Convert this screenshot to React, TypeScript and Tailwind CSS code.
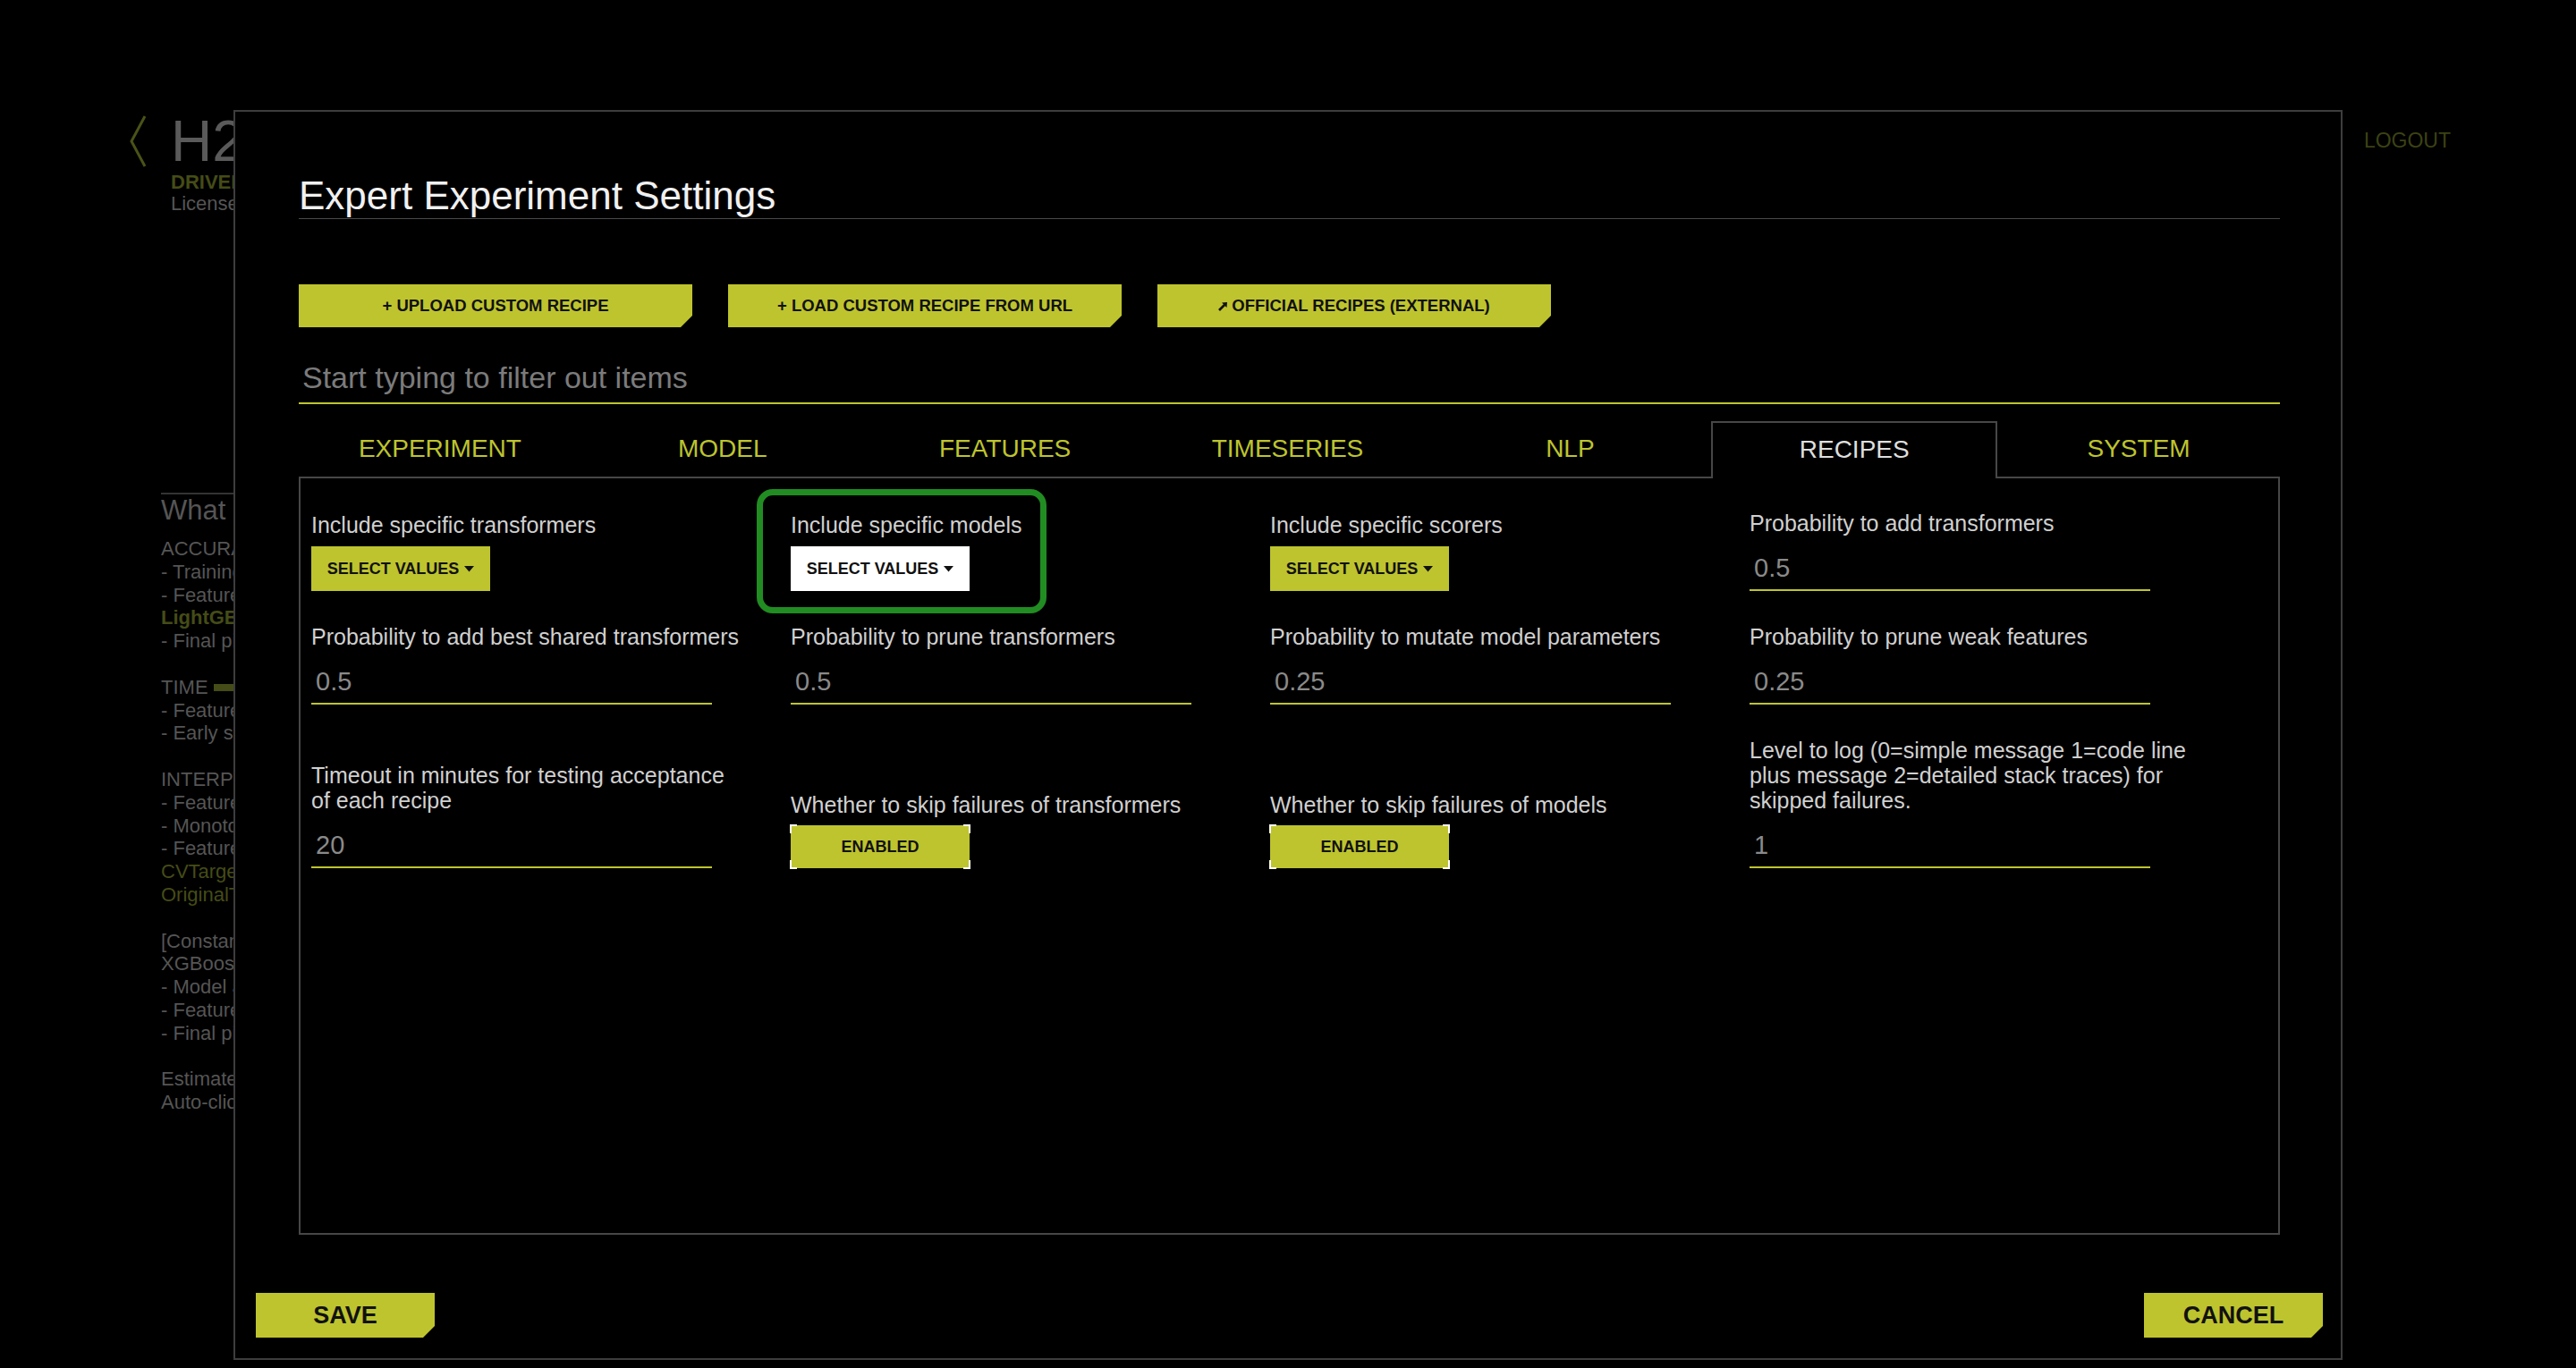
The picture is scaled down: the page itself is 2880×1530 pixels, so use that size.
import React from "react";

type Line = { t: string; olive?: boolean; bold?: boolean; bar?: boolean };

const bgLines: Line[] = [
  { t: "ACCURACY [7/10]:" },
  { t: "- Training data size: 10,000 rows, 20 cols" },
  { t: "- Feature evolution: [LightGBM, XGBoostGBM]" },
  { t: "LightGBM, XGBoostGBM, GLM", olive: true, bold: true },
  { t: "- Final pipeline: Ensemble (4 models)" },
  { t: "" },
  { t: "TIME", bar: true },
  { t: "- Feature evolution: 4 individuals, up to 66 iterations" },
  { t: "- Early stopping: After 10 iterations of no improvement" },
  { t: "" },
  { t: "INTERPRETABILITY [6/10]:" },
  { t: "- Feature pre-pruning strategy: Permutation Importance" },
  { t: "- Monotonicity constraints: disabled" },
  { t: "- Feature engineering search space:" },
  { t: "CVTargetEncode, ClusterTE, Frequent, Interactions", olive: true },
  { t: "OriginalTransformer, NumToCatTE, WeightOfEvidence", olive: true },
  { t: "" },
  { t: "[Constant, DecisionTree, GLM, LightGBM, RuleFit, TensorFlow," },
  { t: "XGBoostGBM] models to train:" },
  { t: "- Model and feature tuning: 8" },
  { t: "- Feature evolution: 264" },
  { t: "- Final pipeline: 4" },
  { t: "" },
  { t: "Estimated runtime: minutes" },
  { t: "Auto-click Finish/Abort if not done in: 1 day/7 days" },
];

const cut =
  "[clip-path:polygon(0_0,100%_0,100%_calc(100%_-_13px),calc(100%_-_13px)_100%,0_100%)]";

function Label({ children }: { children: React.ReactNode }) {
  return (
    <div className="text-[25px] leading-[28px] text-[#d0d0d0] whitespace-nowrap">
      {children}
    </div>
  );
}

function InputField({ label, value }: { label: React.ReactNode; value: string }) {
  return (
    <div className="flex flex-col">
      <Label>{label}</Label>
      <div className="mt-[14px] h-[48px] w-[448px] border-b-2 border-[#bec42e] flex items-center pl-[5px] text-[29px] text-[#8a8a8a]">
        {value}
      </div>
    </div>
  );
}

function Caret() {
  return (
    <svg width="11" height="7" viewBox="0 0 11 7" className="ml-[6px]">
      <path d="M0 0 L11 0 L5.5 6.5 Z" fill="#111" />
    </svg>
  );
}

function SelectField({ label, active }: { label: string; active?: boolean }) {
  return (
    <div className="flex flex-col relative">
      {active && (
        <div className="absolute left-[-38px] top-[-26px] w-[324px] h-[139px] rounded-[18px] border-[7px] border-[#218c22]" />
      )}
      <Label>{label}</Label>
      <div
        className={
          "mt-[10px] h-[50px] w-[200px] flex items-center justify-center text-[18px] font-bold text-[#111] " +
          (active ? "bg-white" : "bg-[#bec42e]")
        }
      >
        SELECT VALUES
        <Caret />
      </div>
    </div>
  );
}

function ToggleField({ label }: { label: string }) {
  return (
    <div className="flex flex-col">
      <Label>{label}</Label>
      <div className="mt-[9px] h-[48px] w-[200px] relative bg-[#bec42e] flex items-center justify-center text-[18px] font-bold text-[#111]">
        ENABLED
        <span className="absolute left-[-1px] top-[-1px] w-[8px] h-[10px] border-l-2 border-t-2 border-white" />
        <span className="absolute right-[-1px] top-[-1px] w-[8px] h-[10px] border-r-2 border-t-2 border-white" />
        <span className="absolute left-[-1px] bottom-[-1px] w-[8px] h-[10px] border-l-2 border-b-2 border-white" />
        <span className="absolute right-[-1px] bottom-[-1px] w-[8px] h-[10px] border-r-2 border-b-2 border-white" />
      </div>
    </div>
  );
}

function ExtIcon() {
  return (
    <svg width="11" height="11" viewBox="0 0 11 11" className="mr-[4px]">
      <path d="M1 10 L7 4" stroke="#111" strokeWidth="2.6" />
      <path d="M4 1.5 L10 1 L9.5 7 Z" fill="#111" />
    </svg>
  );
}

const tabs = ["EXPERIMENT", "MODEL", "FEATURES", "TIMESERIES", "NLP", "RECIPES", "SYSTEM"];

export default function App() {
  return (
    <div
      className="relative w-[2880px] h-[1530px] bg-black overflow-hidden"
      style={{ fontFamily: '"Liberation Sans", Arial, sans-serif' }}
    >
      {/* Background page */}
      <div className="flex items-start pt-[128px] pl-[144px] pr-[140px]">
        <svg width="20" height="58" viewBox="0 0 20 58" className="mt-[1px]">
          <path d="M18 1 L3 29 L18 57" stroke="#4a5217" strokeWidth="3" fill="none" />
        </svg>
        <div className="ml-[27px] w-[70px] overflow-hidden flex flex-col whitespace-nowrap">
          <div className="text-[64px] leading-[60px] text-[#5a5a5a]">H2O</div>
          <div className="mt-[4px] text-[22px] leading-[24px] font-bold text-[#454c17]">DRIVERLESS AI</div>
          <div className="text-[22px] leading-[24px] text-[#555]">Licensed to H2O.ai</div>
        </div>
        <div className="ml-auto mt-[12px] text-[23px] text-[#3c4214]">LOGOUT</div>
      </div>

      <div className="ml-[180px] mt-[311px] w-[81px] overflow-hidden border-t-2 border-[#333] flex flex-col">
        <div className="h-[36px] leading-[36px] text-[31px] text-[#555] whitespace-nowrap">What do these settings mean?</div>
        <div className="mt-[12px] flex flex-col">
          {bgLines.map((l, i) => (
            <div
              key={i}
              className={
                "h-[25.8px] leading-[25.8px] text-[22px] whitespace-nowrap flex items-center " +
                (l.olive ? "text-[#454c17] " : "text-[#555] ") +
                (l.bold ? "font-bold" : "")
              }
            >
              {l.t}
              {l.bar && <span className="ml-[6px] w-[120px] h-[8px] shrink-0 bg-[#454c17]" />}
            </div>
          ))}
        </div>
      </div>

      {/* Modal */}
      <div className="absolute left-[261px] top-[123px] w-[2358px] h-[1398px] border-2 border-[#3d3d3d] bg-black flex flex-col">
        <div className="pl-[71px] pr-[68px] pt-[69px] flex flex-col">
          <div className="h-[51px] leading-[50px] text-[44px] text-[#f0f0f0] border-b border-[#4a4a4a]">
            Expert Experiment Settings
          </div>

          <div className="mt-[73px] flex gap-[40px]">
            {[
              { t: "+ UPLOAD CUSTOM RECIPE", icon: false },
              { t: "+ LOAD CUSTOM RECIPE FROM URL", icon: false },
              { t: "OFFICIAL RECIPES (EXTERNAL)", icon: true },
            ].map((b) => (
              <div
                key={b.t}
                className={
                  "w-[440px] h-[48px] bg-[#bec42e] flex items-center justify-center text-[18.5px] font-bold text-[#111] " +
                  cut
                }
              >
                {b.icon && <ExtIcon />}
                {b.t}
              </div>
            ))}
          </div>

          <div className="mt-[29px] h-[57px] border-b-2 border-[#bec42e] flex items-center pl-[4px] text-[34px] text-[#7b7b7b]">
            Start typing to filter out items
          </div>

          <div className="mt-[19px] flex h-[62px] items-start relative z-10">
            {tabs.map((t) =>
              t === "RECIPES" ? (
                <div
                  key={t}
                  className="flex-1 h-[64px] border-2 border-b-0 border-[#474747] bg-black flex items-center justify-center text-[28px] text-[#dedede] pb-[2px]"
                >
                  {t}
                </div>
              ) : (
                <div key={t} className="flex-1 h-[62px] flex items-center justify-center text-[28px] text-[#bec42e]">
                  {t}
                </div>
              )
            )}
          </div>

          <div className="h-[848px] border-2 border-[#474747]">
            <div className="grid grid-cols-[repeat(4,536px)] gap-y-[37px] items-end pl-[12px] pt-[36px]">
              <SelectField label="Include specific transformers" />
              <SelectField label="Include specific models" active />
              <SelectField label="Include specific scorers" />
              <InputField label="Probability to add transformers" value="0.5" />

              <InputField label="Probability to add best shared transformers" value="0.5" />
              <InputField label="Probability to prune transformers" value="0.5" />
              <InputField label="Probability to mutate model parameters" value="0.25" />
              <InputField label="Probability to prune weak features" value="0.25" />

              <InputField
                label={
                  <>
                    Timeout in minutes for testing acceptance
                    <br />
                    of each recipe
                  </>
                }
                value="20"
              />
              <ToggleField label="Whether to skip failures of transformers" />
              <ToggleField label="Whether to skip failures of models" />
              <InputField
                label={
                  <>
                    Level to log (0=simple message 1=code line
                    <br />
                    plus message 2=detailed stack traces) for
                    <br />
                    skipped failures.
                  </>
                }
                value="1"
              />
            </div>
          </div>
        </div>

        <div className="mt-[65px] pl-[23px] pr-[20px] flex justify-between">
          <div className={"w-[200px] h-[50px] bg-[#bec42e] flex items-center justify-center text-[27px] font-bold text-[#111] " + cut}>
            SAVE
          </div>
          <div className={"w-[200px] h-[50px] bg-[#bec42e] flex items-center justify-center text-[27px] font-bold text-[#111] " + cut}>
            CANCEL
          </div>
        </div>
      </div>
    </div>
  );
}
